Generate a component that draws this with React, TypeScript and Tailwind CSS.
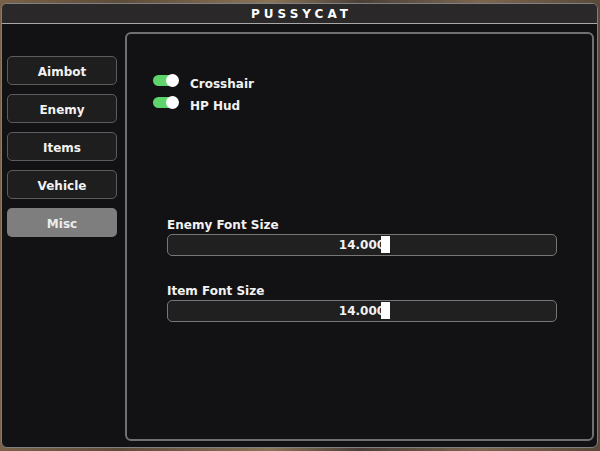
import React from "react";

const font = { fontFamily: '"DejaVu Sans", "Noto Sans", sans-serif' };

function Toggle({ label }: { label: string }) {
  return (
    <div className="flex items-start h-[21px]">
      <div className="relative w-[26px] h-[13px] shrink-0">
        <div className="absolute left-0 top-[1px] w-[24px] h-[11px] rounded-full bg-[#5fd46c]" />
        <div className="absolute right-0 top-0 w-[13px] h-[13px] rounded-full bg-white" />
      </div>
      <span className="ml-[11px] mt-[4px] text-[12px] font-bold text-[#f2f2f2] leading-none">{label}</span>
    </div>
  );
}

function Slider({ label }: { label: string }) {
  return (
    <div className="flex flex-col">
      <span className="text-[12px] font-bold text-[#f2f2f2] leading-[16px] mb-[1px]">{label}</span>
      <div className="w-[390px] h-[22px] rounded-[5px] border border-[#777] bg-[#202020] flex items-center justify-center">
        <span className="relative text-[12px] font-bold text-[#f2f2f2] leading-none">
          14.000
          <span className="absolute top-[-3px] left-[calc(100%-4px)] w-[9px] h-[17px] bg-white" />
        </span>
      </div>
    </div>
  );
}

export default function App() {
  const tabs = ["Aimbot", "Enemy", "Items", "Vehicle", "Misc"];
  return (
    <div
      className="w-[600px] h-[451px] pt-[3px] pl-[1px] pr-[2px] pb-[3px] bg-[linear-gradient(90deg,#7a6249,#5e4c3a_20%,#8a7458_45%,#4a4038_60%,#7c6650_80%,#5a4a3a)]"
      style={font}
    >
      <div className="w-full h-full flex flex-col rounded-[6px] border-[1.5px] border-[#808080] bg-[#121214] overflow-hidden">
        <div className="h-[20px] shrink-0 bg-[#2a2829] flex items-center justify-center border-b border-[#a8a8a8]">
          <span className="text-[12px] font-bold text-white tracking-[4px] pl-[4px] leading-none">PUSSYCAT</span>
        </div>
        <div className="flex-1 flex pl-[5px] pr-[3px] pt-[8px] pb-[6px]">
          <div className="w-[110px] shrink-0 flex flex-col gap-[9px] pt-[24px]">
            {tabs.map((t) => (
              <div
                key={t}
                className={
                  t === "Misc"
                    ? "h-[29px] pt-[2px] rounded-[5px] bg-[#7e7e7e] flex items-center justify-center text-[12px] font-bold text-[#ececec]"
                    : "h-[29px] pt-[2px] rounded-[5px] border border-[#5c5c5c] bg-[#1e1e1e] flex items-center justify-center text-[12px] font-bold text-[#f2f2f2]"
                }
              >
                {t}
              </div>
            ))}
          </div>
          <div className="ml-[8px] flex-1 rounded-[6px] border-2 border-[#707070] bg-[#121214] flex flex-col">
            <div className="pl-[26px] pt-[40px] flex flex-col gap-[1px]">
              <Toggle label="Crosshair" />
              <Toggle label="HP Hud" />
            </div>
            <div className="pl-[40px] pt-[100px] flex flex-col gap-[27px]">
              <Slider label="Enemy Font Size" />
              <Slider label="Item Font Size" />
            </div>
          </div>
        </div>
      </div>
    </div>
  );
}
